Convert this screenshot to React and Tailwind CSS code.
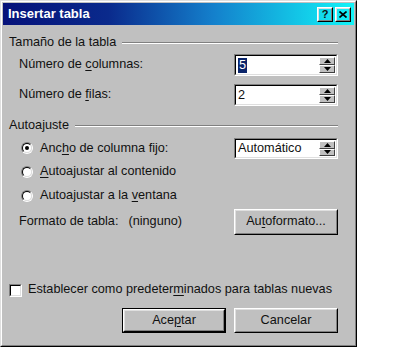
import React from "react";

const sunken =
  "border border-t-[#808080] border-l-[#808080] border-r-white border-b-white";
const sunkenInner =
  "border border-t-black border-l-black border-r-[#dfdfdf] border-b-[#dfdfdf]";

const U = ({ children }) => <span className="underline underline-offset-2">{children}</span>;

const SpinButtons = () => (
  <div className="flex flex-col w-[16px] h-full">
    {["up", "down"].map((d) => (
      <div
        key={d}
        className="flex-1 flex items-center justify-center bg-[#c0c0c0] border border-t-white border-l-white border-r-[#404040] border-b-[#404040]"
      >
        <svg width="7" height="4" viewBox="0 0 7 4">
          {d === "up" ? (
            <path d="M3.5 0 L7 4 L0 4 Z" fill="#000" />
          ) : (
            <path d="M0 0 L7 0 L3.5 4 Z" fill="#000" />
          )}
        </svg>
      </div>
    ))}
  </div>
);

const SpinField = ({ value, selected, h = "h-[22px]" }) => (
  <div className={`w-[104px] ${h} ${sunken}`}>
    <div className={`w-full h-full bg-white flex items-center pl-[2px] pr-[1px] py-[1px] ${sunkenInner}`}>
      <div className="flex-1 flex items-center">
        {selected ? (
          <span className="bg-[#0a246a] text-white px-[1px] leading-[15px]">{value}</span>
        ) : (
          <span className="leading-[15px]">{value}</span>
        )}
      </div>
      <SpinButtons />
    </div>
  </div>
);

const Button = ({ children, isDefault, w = "w-[104px]", h = "h-[25px]" }) => (
  <div className={`${w} ${h} ${isDefault ? "border border-black" : ""}`}>
    <div className="w-full h-full border border-t-white border-l-white border-r-black border-b-black">
      <div className="w-full h-full flex items-center justify-center border border-t-[#dfdfdf] border-l-[#dfdfdf] border-r-[#808080] border-b-[#808080]">
        {children}
      </div>
    </div>
  </div>
);

const Radio = ({ checked }) => (
  <div className="w-[12px] h-[12px] rounded-full border border-t-[#808080] border-l-[#808080] border-r-white border-b-white">
    <div className="w-full h-full rounded-full bg-white border border-t-black border-l-black border-r-[#dfdfdf] border-b-[#dfdfdf] flex items-center justify-center">
      {checked && <div className="w-[4px] h-[4px] rounded-full bg-black" />}
    </div>
  </div>
);

const GroupHeader = ({ title }) => (
  <div className="flex items-center h-[14px] gap-[6px]">
    <span>{title}</span>
    <div className="flex-1 border-t border-t-[#808080] border-b border-b-white" />
  </div>
);

export default function App() {
  return (
    <div className="w-[400px] h-[348px] bg-white" style={{ fontFamily: "'Liberation Sans', Arial, sans-serif" }}>
      <div className="w-[357px] h-[347px] bg-[#c0c0c0] border border-t-[#dfdfdf] border-l-[#dfdfdf] border-r-black border-b-black">
        <div className="w-full h-full flex flex-col border border-t-white border-l-white border-r-[#808080] border-b-[#808080] p-[1px] text-[12.7px] text-[#111]">
          {/* title bar */}
          <div className="h-[22px] flex items-center pl-[5px] pr-[3px] bg-[linear-gradient(90deg,#06127a_0%,#0a2a8c_30%,#1480cc_60%,#12f4f8_100%)]">
            <span className="flex-1 text-white font-bold text-[13px]">Insertar tabla</span>
            <div className="flex gap-[2px]">
              <Button w="w-[16px]" h="h-[15px]">
                <span className="font-bold text-[11px] leading-none">?</span>
              </Button>
              <Button w="w-[16px]" h="h-[15px]">
                <svg width="8" height="7" viewBox="0 0 8 7">
                  <path d="M0.5 0.5 L7.5 6.5 M7.5 0.5 L0.5 6.5" stroke="#000" strokeWidth="1.6" />
                </svg>
              </Button>
            </div>
          </div>

          <div className="flex flex-col pl-[6px] pr-[16px] pt-[11px]">
            <GroupHeader title="Tamaño de la tabla" />
            <div className="flex items-center justify-between pl-[10px] mt-[4px]">
              <span>
                Número de <U>c</U>olumnas:
              </span>
              <SpinField value="5" selected />
            </div>
            <div className="flex items-center justify-between pl-[10px] mt-[8px]">
              <span>
                Número de <U>f</U>ilas:
              </span>
              <SpinField value="2" />
            </div>

            <div className="mt-[13px]">
              <GroupHeader title="Autoajuste" />
            </div>
            <div className="flex items-center justify-between pl-[12px] mt-[5px]">
              <div className="flex items-center gap-[7px]">
                <Radio checked />
                <span>
                  Anc<U>h</U>o de columna fijo:
                </span>
              </div>
              <SpinField value="Automático" h="h-[21px]" />
            </div>
            <div className="flex items-center h-[14px] pl-[12px] gap-[7px] mt-[6px]">
              <Radio />
              <span>
                <U>A</U>utoajustar al contenido
              </span>
            </div>
            <div className="flex items-center h-[14px] pl-[12px] gap-[7px] mt-[10px]">
              <Radio />
              <span>
                Autoajustar a la <U>v</U>entana
              </span>
            </div>
            <div className="flex items-center justify-between pl-[10px] mt-[6px]">
              <div className="flex gap-[10px]">
                <span>Formato de tabla:</span>
                <span>(ninguno)</span>
              </div>
              <Button h="h-[26px]">
                <span>
                  Au<U>t</U>oformato...
                </span>
              </Button>
            </div>

            <div className="flex items-center h-[14px] gap-[6px] mt-[48px]">
              <div className={`w-[13px] h-[13px] ${sunken}`}>
                <div className={`w-full h-full bg-white ${sunkenInner}`} />
              </div>
              <span>
                Establecer como predeter<U>m</U>inados para tablas nuevas
              </span>
            </div>
            <div className="flex justify-end gap-[8px] mt-[11px]">
              <Button isDefault>
                <span>
                  Ace<U>p</U>tar
                </span>
              </Button>
              <Button>
                <span>Cancelar</span>
              </Button>
            </div>
          </div>
        </div>
      </div>
    </div>
  );
}
